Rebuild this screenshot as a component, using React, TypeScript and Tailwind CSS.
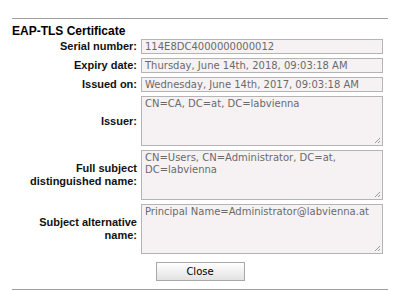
import React from 'react';

const font = { fontFamily: '"DejaVu Sans", Verdana, sans-serif' };
const labelFont = { fontFamily: '"Liberation Sans", Tahoma, Arial, sans-serif' };

interface FieldProps {
  label: React.ReactNode;
  value: string;
  multiline?: boolean;
}

function Field({ label, value, multiline = false }: FieldProps) {
  return (
    <>
      <div
        className="flex items-center justify-end text-right text-[11px] font-bold leading-[13px] text-[#111]"
        style={labelFont}
      >
        {label}
      </div>
      {multiline ? (
        <div className="relative h-[50px] border border-[#b4b4b4] bg-[#f6f2f4] px-[3px] pt-[1px] text-[10px] leading-[12px] text-[#6a6a6a]">
          {value}
          <svg className="absolute bottom-[1px] right-[1px]" width="7" height="7" viewBox="0 0 7 7">
            <path d="M6 1 L1 6 M6 4 L4 6" stroke="#999" strokeWidth="1" />
          </svg>
        </div>
      ) : (
        <div className="h-[15px] border border-[#b4b4b4] bg-[#f6f2f4] px-[3px] text-[10px] leading-[13px] text-[#6a6a6a] whitespace-nowrap overflow-hidden">
          {value}
        </div>
      )}
    </>
  );
}

export default function App() {
  return (
    <div className="w-[400px] h-[291px] bg-white overflow-hidden" style={font}>
      <div className="mx-[12px] pt-[18px]">
        <div className="border-t border-[#a0a0a0]" />
        <div className="mt-[5px] text-[12px] font-bold leading-[14px] text-black" style={labelFont}>
          EAP-TLS Certificate
        </div>
        <div className="mt-[1px] grid grid-cols-[125px_242px] gap-x-[4px] gap-y-[4px]">
          <Field label="Serial number:" value="114E8DC4000000000012" />
          <Field label="Expiry date:" value="Thursday, June 14th, 2018, 09:03:18 AM" />
          <Field label="Issued on:" value="Wednesday, June 14th, 2017, 09:03:18 AM" />
          <Field label="Issuer:" value="CN=CA, DC=at, DC=labvienna" multiline />
          <Field
            label={<span>Full subject<br />distinguished name:</span>}
            value="CN=Users, CN=Administrator, DC=at, DC=labvienna"
            multiline
          />
          <Field
            label={<span>Subject alternative<br />name:</span>}
            value="Principal Name=Administrator@labvienna.at"
            multiline
          />
        </div>
        <div className="mt-[8px] flex justify-center">
          <button className="h-[19px] w-[89px] border border-[#a8a8a8] bg-gradient-to-b from-white to-[#e2e2e2] text-[10px] leading-[15px] text-black">
            Close
          </button>
        </div>
        <div className="mt-[8px] border-t border-[#a0a0a0]" />
      </div>
    </div>
  );
}
